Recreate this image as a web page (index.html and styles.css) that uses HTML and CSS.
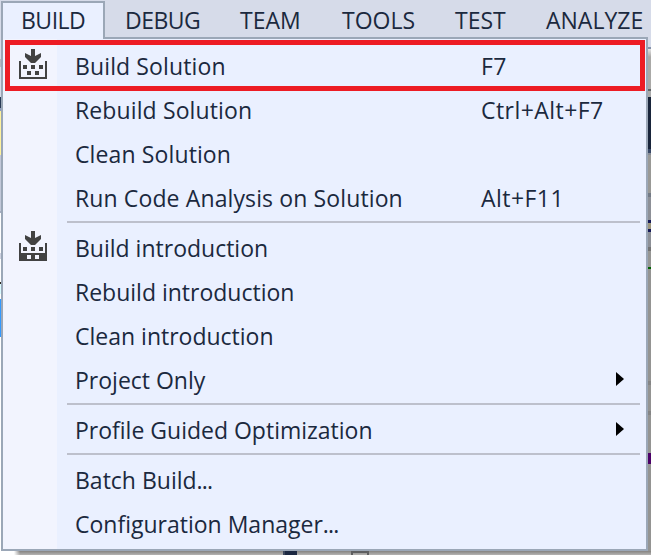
FILE: index.html
```html
<!DOCTYPE html>
<html lang="en">
<head>
<meta charset="utf-8">
<title>Build menu</title>
<link rel="stylesheet" href="styles.css">
</head>
<body>
<div class="window">
  <div class="edge-left"></div><div class="edge-right"></div><div class="edge-bottom"></div>
  <nav class="menubar">
    <span class="tab active">BUILD</span><span class="tab debug">DEBUG</span><span class="tab team">TEAM</span><span class="tab tools">TOOLS</span><span class="tab test">TEST</span><span class="tab analyze">ANALYZE</span>
  </nav>
  <div class="menu">
    <div class="item"><span class="icon"><svg width="28" height="30" viewBox="0 0 28 30" shape-rendering="crispEdges"><path fill="#424242" d="M0 12h2v16h24V12h2v18H0zM4 16h4v4H4zM12 16h4v4h-4zM20 16h4v4h-4zM8 22h4v4H8zM16 22h4v4h-4z"/><path shape-rendering="auto" fill="#424242" d="M12 0h4v7l6-3v4l-6 6h-4L6 8V4l6 3z"/></svg></span><span class="label wide">Build Solution</span><span class="key">F7</span></div>
    <div class="item"><span class="icon"></span><span class="label wide">Rebuild Solution</span><span class="key">Ctrl+Alt+F7</span></div>
    <div class="item"><span class="icon"></span><span class="label wide">Clean Solution</span></div>
    <div class="item"><span class="icon"></span><span class="label wide">Run Code Analysis on Solution</span><span class="key">Alt+F11</span></div>
    <hr>
    <div class="item"><span class="icon"><svg width="28" height="30" viewBox="0 0 28 30" shape-rendering="crispEdges"><path fill="#424242" fill-rule="evenodd" d="M0 12h2v10h24V12h2v18H0zM8 24v4h4v-4zM16 24v4h4v-4zM4 16h4v4H4zM12 16h4v4h-4zM20 16h4v4h-4z"/><path shape-rendering="auto" fill="#424242" d="M12 0h4v7l6-3v4l-6 6h-4L6 8V4l6 3z"/></svg></span><span class="label">Build introduction</span></div>
    <div class="item"><span class="icon"></span><span class="label">Rebuild introduction</span></div>
    <div class="item"><span class="icon"></span><span class="label">Clean introduction</span></div>
    <div class="item"><span class="icon"></span><span class="label">Project Only</span><span class="key"></span><i class="arrow"></i></div>
    <hr>
    <div class="item"><span class="icon"></span><span class="label">Profile Guided Optimization</span><span class="key"></span><i class="arrow"></i></div>
    <hr>
    <div class="item"><span class="icon"></span><span class="label">Batch Build<span class="dots">...</span></span></div>
    <div class="item"><span class="icon"></span><span class="label">Configuration Manager<span class="dots">...</span></span></div>
  </div>
  <div class="highlight"></div>
</div>
</body>
</html>
```
FILE: styles.css
```css
* { box-sizing: border-box; }
body { margin: 0; overflow: hidden; }
.window {
  position: relative; width: 651px; height: 555px; overflow: hidden;
  background: #d6dbe9; color: #1b293e;
  font: 23px/44px "Open Sans", "Noto Sans", sans-serif;
}
.edge-left {
  position: absolute; left: 0; top: 0; width: 1px; height: 555px;
  background: linear-gradient(#d6dbe9 59px, #b7b9bf 59px 67px, #d6dbe9 67px 97px, #293955 97px 108px, #8e9bbc 108px 111px, #fff29d 111px 155px, #c2c8d9 155px 211px, #a5adc0 211px 213px, #fff 213px 253px, #cfd3e2 253px 259px, #fff 259px 282px, #302820 282px 284px, #d9fbff 284px 294px, #fff 294px 299px, #3399ff 299px 337px, #fff 337px);
}
.edge-right {
  position: absolute; left: 648px; top: 47px; width: 3px; height: 508px;
  background: linear-gradient(#8592aa 2px, #e5e5e5 2px, #aaa9a7 10px 42px, #606468 42px 44px, #aaa 44px 50px, #18243a 50px 102px, #384866 102px 106px, #858a94 106px 108px, #999996 108px 146px, #737a85 146px 150px, #8d9097 150px 173px, #151958 173px 176px, #9c957c 176px 182px, #151958 182px 185px, #8d9097 185px 200px, #747474 200px 204px, #969694 204px 220px, #006400 220px 222px, #949492 222px 334px, #858585 334px 338px, #949492 338px 364px, #858585 364px 368px, #949492 368px 406px, #4b0068 406px 417px, #949492 417px);
}
.edge-bottom {
  position: absolute; left: 0; top: 551px; width: 651px; height: 4px;
  background:
    linear-gradient(#5e5e60, #5e5e60) 351px 0 / 18px 2px no-repeat,
    linear-gradient(#5e5e60, #5e5e60) 351px 0 / 2px 4px no-repeat,
    linear-gradient(#5e5e60, #5e5e60) 367px 0 / 2px 4px no-repeat,
    linear-gradient(90deg, transparent 283px, #3b465b 283px 285px, #1b2740 285px 297px, transparent 297px),
    linear-gradient(90deg, #fff 14px, transparent 20px),
    linear-gradient(#858381, #b5b4b3);
}
.menubar { display: flex; height: 37px; padding: 1px 0 0 1px; line-height: 39px; white-space: nowrap; }
.tab { display: block; padding-left: 20px; }
.active {
  position: relative; z-index: 2; flex: none; width: 104px; height: 38px;
  padding-left: 18px; line-height: 35px; letter-spacing: -0.5px; background: #eaf0ff;
  border: 2px solid #9ba7b7; border-bottom: 0;
}
.debug, .team, .tools, .test, .analyze { flex: none; }
.debug { width: 115px; letter-spacing: -0.5px; }
.team { width: 102px; }
.tools { width: 113px; }
.test { width: 91px; }
.menu {
  width: 647px; height: 514px; margin-left: 1px; padding: 6px 0 2px;
  border: 2px solid #9ba7b7;
  background: linear-gradient(90deg, #f2f4fe 54px, #eaf0ff 54px);
}
.item { display: flex; height: 44px; align-items: center; white-space: nowrap; }
.icon { flex: none; width: 72px; height: 44px; padding: 4px 0 0 16px; line-height: 0; }
.label, .key { flex: none; height: 44px; line-height: 42px; }
.label { width: 406px; }
.wide { letter-spacing: 0.12px; }
.dots { letter-spacing: -0.8px; }
.key { width: 135px; letter-spacing: 0.45px; }
.arrow { width: 8px; height: 14px; margin-top: -4px; background: #000; clip-path: polygon(0 0, 100% 50%, 0 100%); }
hr { width: 573px; height: 2px; margin: 0 0 4px 64px; border: 0; background: #bdc0cc; }
.highlight { position: absolute; z-index: 3; left: 5px; top: 40px; width: 640px; height: 51px; border: 5px solid #ed1c24; }
```
